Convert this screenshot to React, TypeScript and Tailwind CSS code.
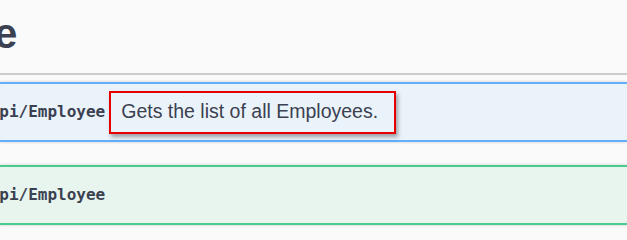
const App = () => {
    return (
        <div className="w-[627px] h-[240px] overflow-hidden bg-[#fafafa] font-['Liberation_Sans',Arial,sans-serif] text-[#3b4151]">
            <h2 className="pt-[13px] pb-[18px] border-b-2 border-[#cbccd0] text-[42px] leading-[42px] font-bold whitespace-nowrap">
                <span className="ml-[-181px]">Employee</span>
            </h2>

            <div className="mt-[7px] h-[60px] flex items-center border-y-2 border-[#61affe] bg-[#ebf3fa] shadow-[0_0_3px_rgba(0,0,0,0.19)]">
                <span className="ml-[-20px] font-['DejaVu_Sans_Mono',monospace] text-[16px] font-bold whitespace-nowrap">
                    /api/Employee
                </span>
                <div className="ml-[4px] w-[287px] h-[43px] flex items-center pl-[10px] border-2 border-[#e60000] shadow-[2px_3px_4px_rgba(0,0,0,0.35)]">
                    <span className="text-[19.5px] whitespace-nowrap">Gets the list of all Employees.</span>
                </div>
            </div>

            <div className="mt-[23px] h-[60px] flex items-center border-y-2 border-[#49cc90] bg-[#e8f5ef] shadow-[0_0_3px_rgba(0,0,0,0.19)]">
                <span className="ml-[-20px] font-['DejaVu_Sans_Mono',monospace] text-[16px] font-bold whitespace-nowrap">
                    /api/Employee
                </span>
            </div>
        </div>
    );
}

export default App;
